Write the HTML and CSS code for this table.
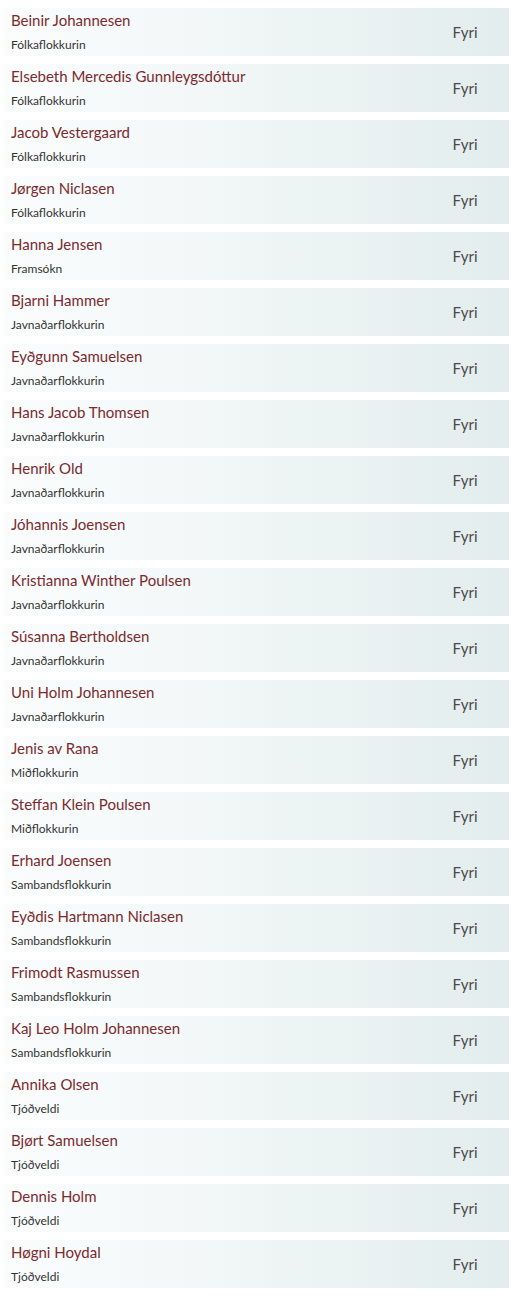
FILE: index.html
```html
<!DOCTYPE html>
<html lang="fo">
<head>
<meta charset="utf-8">
<link rel="stylesheet" href="styles.css">
</head>
<body>
<div class="list">
  <div class="row"><div class="who"><div class="name">Beinir Johannesen</div><div class="party">Fólkaflokkurin</div></div><div class="vote">Fyri</div></div>
  <div class="row"><div class="who"><div class="name">Elsebeth Mercedis Gunnleygsdóttur</div><div class="party">Fólkaflokkurin</div></div><div class="vote">Fyri</div></div>
  <div class="row"><div class="who"><div class="name">Jacob Vestergaard</div><div class="party">Fólkaflokkurin</div></div><div class="vote">Fyri</div></div>
  <div class="row"><div class="who"><div class="name">Jørgen Niclasen</div><div class="party">Fólkaflokkurin</div></div><div class="vote">Fyri</div></div>
  <div class="row"><div class="who"><div class="name">Hanna Jensen</div><div class="party">Framsókn</div></div><div class="vote">Fyri</div></div>
  <div class="row"><div class="who"><div class="name">Bjarni Hammer</div><div class="party">Javnaðarflokkurin</div></div><div class="vote">Fyri</div></div>
  <div class="row"><div class="who"><div class="name">Eyðgunn Samuelsen</div><div class="party">Javnaðarflokkurin</div></div><div class="vote">Fyri</div></div>
  <div class="row"><div class="who"><div class="name">Hans Jacob Thomsen</div><div class="party">Javnaðarflokkurin</div></div><div class="vote">Fyri</div></div>
  <div class="row"><div class="who"><div class="name">Henrik Old</div><div class="party">Javnaðarflokkurin</div></div><div class="vote">Fyri</div></div>
  <div class="row"><div class="who"><div class="name">Jóhannis Joensen</div><div class="party">Javnaðarflokkurin</div></div><div class="vote">Fyri</div></div>
  <div class="row"><div class="who"><div class="name">Kristianna Winther Poulsen</div><div class="party">Javnaðarflokkurin</div></div><div class="vote">Fyri</div></div>
  <div class="row"><div class="who"><div class="name">Súsanna Bertholdsen</div><div class="party">Javnaðarflokkurin</div></div><div class="vote">Fyri</div></div>
  <div class="row"><div class="who"><div class="name">Uni Holm Johannesen</div><div class="party">Javnaðarflokkurin</div></div><div class="vote">Fyri</div></div>
  <div class="row"><div class="who"><div class="name">Jenis av Rana</div><div class="party">Miðflokkurin</div></div><div class="vote">Fyri</div></div>
  <div class="row"><div class="who"><div class="name">Steffan Klein Poulsen</div><div class="party">Miðflokkurin</div></div><div class="vote">Fyri</div></div>
  <div class="row"><div class="who"><div class="name">Erhard Joensen</div><div class="party">Sambandsflokkurin</div></div><div class="vote">Fyri</div></div>
  <div class="row"><div class="who"><div class="name">Eyðdis Hartmann Niclasen</div><div class="party">Sambandsflokkurin</div></div><div class="vote">Fyri</div></div>
  <div class="row"><div class="who"><div class="name">Frimodt Rasmussen</div><div class="party">Sambandsflokkurin</div></div><div class="vote">Fyri</div></div>
  <div class="row"><div class="who"><div class="name">Kaj Leo Holm Johannesen</div><div class="party">Sambandsflokkurin</div></div><div class="vote">Fyri</div></div>
  <div class="row"><div class="who"><div class="name">Annika Olsen</div><div class="party">Tjóðveldi</div></div><div class="vote">Fyri</div></div>
  <div class="row"><div class="who"><div class="name">Bjørt Samuelsen</div><div class="party">Tjóðveldi</div></div><div class="vote">Fyri</div></div>
  <div class="row"><div class="who"><div class="name">Dennis Holm</div><div class="party">Tjóðveldi</div></div><div class="vote">Fyri</div></div>
  <div class="row"><div class="who"><div class="name">Høgni Hoydal</div><div class="party">Tjóðveldi</div></div><div class="vote">Fyri</div></div>
</div>
</body>
</html>
```

FILE: styles.css
```css
html, body {
  margin: 0;
  padding: 0;
  background: #ffffff;
}
body {
  font-family: Lato, "Open Sans", sans-serif;
}
.list {
  display: flex;
  flex-direction: column;
  gap: 8px;
  padding: 8px 7px 8px 3px;
}
.row {
  display: flex;
  align-items: center;
  height: 48px;
  background: linear-gradient(to right, #fbfdfd 0%, #f1f6f6 45%, #e2eded 100%);
}
.who {
  flex: 1;
  padding-left: 8px;
  display: flex;
  flex-direction: column;
}
.name {
  font-size: 15px;
  line-height: 24px;
  color: #7b2a2e;
}
.party {
  font-size: 12px;
  line-height: 22px;
  padding-top: 2px;
  color: #333333;
}
.vote {
  width: 80px;
  text-align: center;
  font-size: 15px;
  color: #4a4a4a;
  padding-right: 4px;
}
```
